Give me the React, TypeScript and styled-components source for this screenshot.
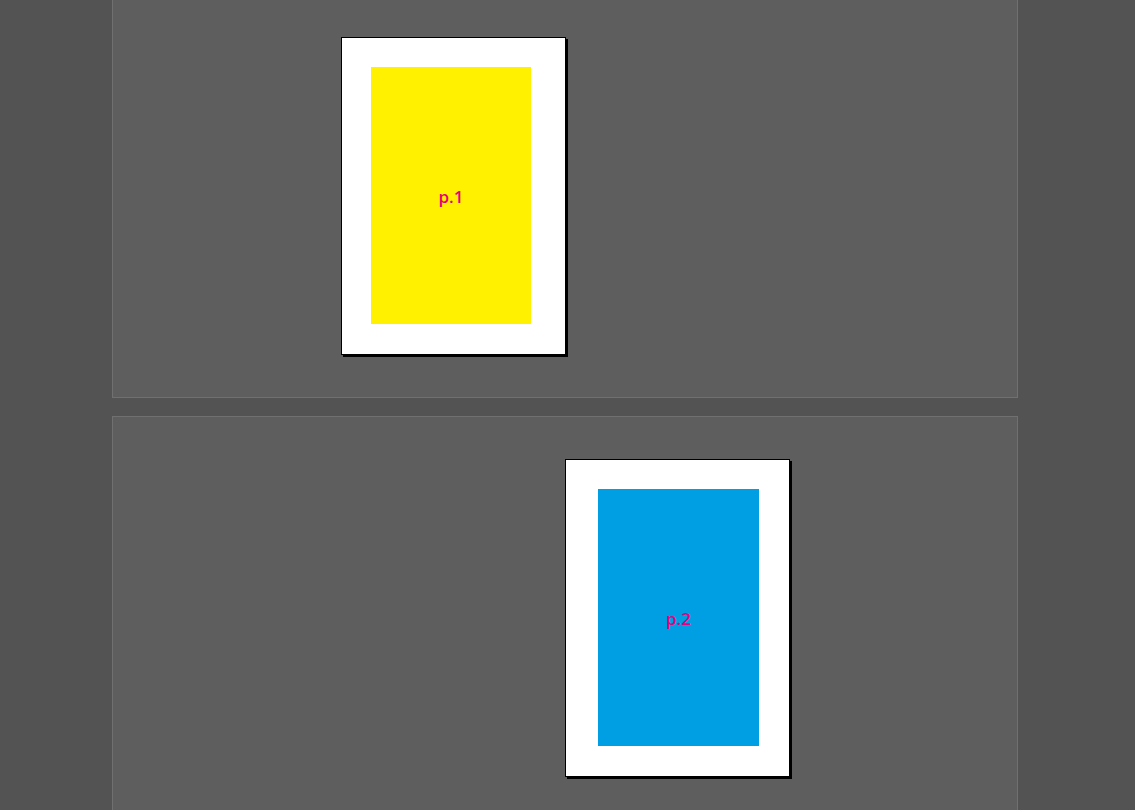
import React from "react";
import styled, { createGlobalStyle } from "styled-components";

const GlobalStyle = createGlobalStyle`
    html, body {
        margin: 0;
        padding: 0;
        background: #535353;
        overflow: hidden;
    }
    body {
        font-family: "Open Sans", "Noto Sans", sans-serif;
    }
`;

const Pasteboard = styled.div`
    width: 1135px;
    height: 816px;
    overflow: hidden;
    display: flex;
    flex-direction: column;
    gap: 18px;
    padding-left: 112px;
    margin-top: -6px;
    box-sizing: border-box;
`;

const Spread = styled.div`
    flex: none;
    width: 906px;
    height: 404px;
    box-sizing: border-box;
    border: 1px solid #707070;
    background: #5e5e5e;
    display: flex;
    justify-content: center;
    padding-top: 42px;
`;

const PageSlot = styled.div`
    width: 224px;
    height: 318px;
`;

const Page = styled.div<{ $side: "left" | "right" }>`
    width: 225px;
    height: 318px;
    box-sizing: border-box;
    background: #ffffff;
    border: 1px solid #000000;
    box-shadow: 2px 2px 0 #000000;
    padding: 29px ${({ $side }) => ($side === "left" ? "34px" : "30px")} 30px
        ${({ $side }) => ($side === "left" ? "29px" : "32px")};
    display: flex;
`;

const Frame = styled.div<{ $fill: string }>`
    flex: 1;
    background: ${({ $fill }) => $fill};
    display: flex;
    align-items: center;
    justify-content: center;
    color: #e6007e;
    font-size: 17px;
    font-weight: 600;
    padding-top: 1px;
`;

interface IPageData {
    label: string;
    fill: string;
    side: "left" | "right";
}

const spreads: IPageData[] = [
    { label: "p.1", fill: "#fff100", side: "left" },
    { label: "p.2", fill: "#009fe3", side: "right" },
];

export default function App() {
    return (
        <>
            <GlobalStyle />
            <Pasteboard>
                {spreads.map((page, index) => {
                    return <Spread key={index}>
                        {page.side === "right" && <PageSlot />}
                        <PageSlot>
                            <Page $side={page.side}>
                                <Frame $fill={page.fill}>{page.label}</Frame>
                            </Page>
                        </PageSlot>
                        {page.side === "left" && <PageSlot />}
                    </Spread>
                })}
            </Pasteboard>
        </>
    );
}
